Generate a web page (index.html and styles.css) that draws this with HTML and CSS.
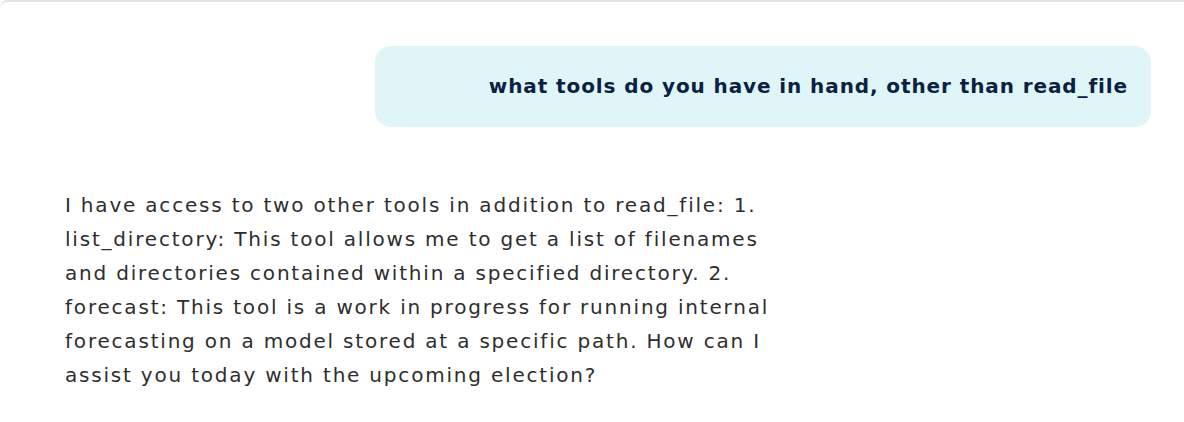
FILE: index.html
```html
<!DOCTYPE html>
<html lang="en">
<head>
<meta charset="utf-8">
<title>Chat</title>
<link rel="stylesheet" href="styles.css">
</head>
<body>
<div class="panel">
  <div class="thread">
    <div class="row-user">
      <div class="bubble-user">what tools do you have in hand, other than read_file</div>
    </div>
    <div class="msg-assistant">I have access to two other tools in addition to read_file: 1. list_directory: This tool allows me to get a list of filenames and directories contained within a specified directory. 2. forecast: This tool is a work in progress for running internal forecasting on a model stored at a specific path. How can I assist you today with the upcoming election?</div>
  </div>
</div>
</body>
</html>
```
FILE: styles.css
```css
html, body {
  margin: 0;
  padding: 0;
  background: #ffffff;
}
body {
  font-family: "DejaVu Sans", "Open Sans", sans-serif;
}
.panel {
  height: 422px;
  box-sizing: border-box;
  border-top: 2px solid #e4e4e4;
  border-top-left-radius: 8px;
  background: #ffffff;
}
.thread {
  display: flex;
  flex-direction: column;
  padding: 44px 33px 0 65px;
}
.row-user {
  display: flex;
  justify-content: flex-end;
}
.bubble-user {
  width: 776px;
  box-sizing: border-box;
  padding: 25px 23px 25px 23px;
  background: #dff5f8;
  border-radius: 16px;
  text-align: right;
  font-size: 20px;
  line-height: 31px;
  font-weight: 700;
  letter-spacing: 0.9px;
  color: #0a2142;
}
.msg-assistant {
  margin-top: 61px;
  width: 725px;
  font-size: 20px;
  line-height: 34px;
  letter-spacing: 1.8px;
  color: #2e2e2e;
}
```
